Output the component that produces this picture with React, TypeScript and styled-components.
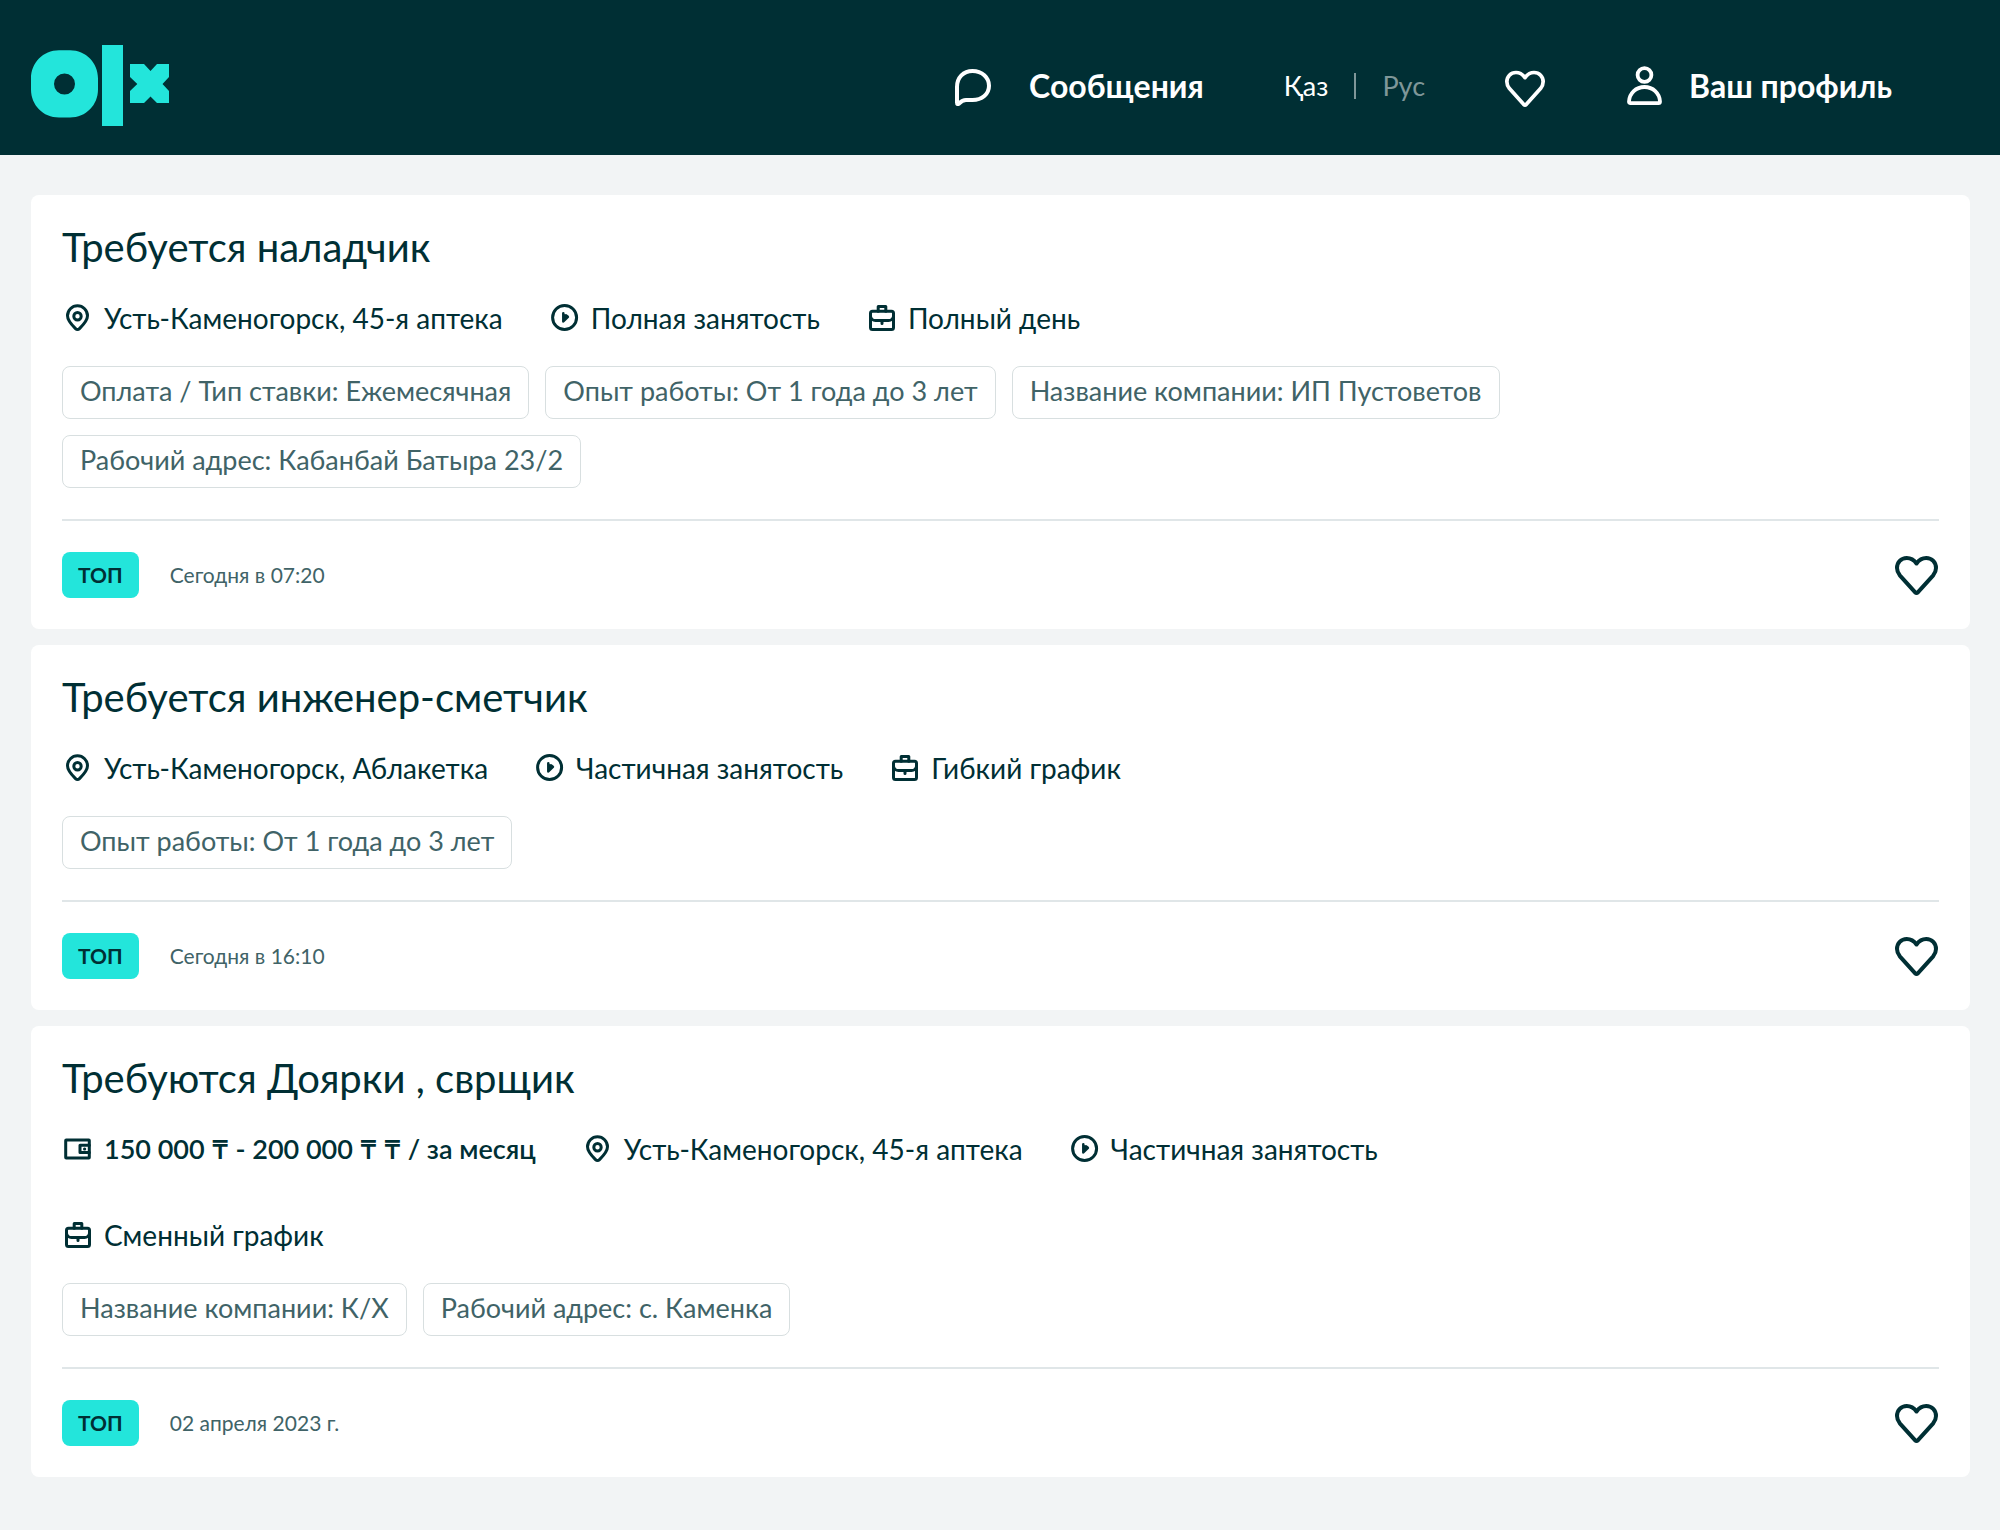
import React from "react";
import styled, { createGlobalStyle } from "styled-components";

const color = {
  dark: "#002f34",
  muted: "#406367",
  accent: "#23e5db",
  page: "#f2f4f5",
  line: "#d8dfe0",
};

const GlobalStyle = createGlobalStyle`
  *, *::before, *::after { box-sizing: border-box; }
  body {
    margin: 0;
    background: ${color.page};
    color: ${color.dark};
    font-family: Lato, "Open Sans", sans-serif;
  }
`;

const Header = styled.header`
  display: flex;
  align-items: center;
  justify-content: space-between;
  min-height: 155px;
  padding: 16px 108px 0 31px;
  background: ${color.dark};
  color: #fff;
`;

const LogoLink = styled.a`
  display: flex;
`;

const Nav = styled.nav`
  display: flex;
  align-items: center;
  gap: 80px;
`;

const NavLink = styled.a<{ $gap?: number }>`
  display: flex;
  align-items: center;
  gap: ${(p) => p.$gap ?? 0}px;
  color: #fff;
  font-size: 32px;
  font-weight: 700;
  line-height: 40px;
  text-decoration: none;
  white-space: nowrap;
`;

const Languages = styled.div`
  display: flex;
  align-items: center;
  gap: 26px;
`;

const LanguageButton = styled.button<{ $active?: boolean }>`
  padding: 0;
  border: 0;
  background: none;
  color: ${(p) => (p.$active ? "#fff" : "#7f9799")};
  font: inherit;
  font-size: 27px;
  line-height: 40px;
  cursor: pointer;
`;

const Separator = styled.span`
  width: 2px;
  height: 26px;
  background: #7f9799;
`;

const List = styled.main`
  display: flex;
  flex-direction: column;
  gap: 16px;
  padding: 40px 30px 52px 31px;
`;

const Card = styled.article`
  padding: 31px;
  border-radius: 8px;
  background: #fff;
`;

const Title = styled.h2`
  margin: 0 0 30px;
  font-size: 40px;
  font-weight: 400;
  line-height: 43px;
`;

const Details = styled.ul`
  display: flex;
  flex-wrap: wrap;
  gap: 48px 46px;
  max-width: 80%;
  margin: 0 0 29px;
  padding: 0;
  list-style: none;
`;

const Detail = styled.li<{ $strong?: boolean }>`
  display: flex;
  align-items: center;
  gap: 10px;
  font-size: ${(p) => (p.$strong ? 27 : 28)}px;
  font-weight: ${(p) => (p.$strong ? 600 : 400)};
  line-height: 38px;
  white-space: nowrap;
`;

const Tags = styled.ul`
  display: flex;
  flex-wrap: wrap;
  gap: 16px;
  margin: 0;
  padding: 0;
  list-style: none;
`;

const Tag = styled.li`
  padding: 5px 17px 8px;
  border: 1px solid ${color.line};
  border-radius: 8px;
  color: ${color.muted};
  font-size: 27px;
  line-height: 38px;
`;

const Footer = styled.footer`
  display: flex;
  align-items: center;
  gap: 31px;
  margin-top: 31px;
  padding-top: 31px;
  border-top: 2px solid #e0e6e8;
`;

const Badge = styled.span`
  padding: 0 16px;
  border-radius: 8px;
  background: ${color.accent};
  font-size: 21px;
  font-weight: 700;
  line-height: 46px;
`;

const PostedAt = styled.span`
  color: ${color.muted};
  font-size: 21px;
  line-height: 46px;
`;

const FavoriteButton = styled.button`
  display: flex;
  margin-left: auto;
  padding: 0;
  border: 0;
  background: none;
  color: inherit;
  cursor: pointer;
`;

const Icon = styled.svg.attrs({ "aria-hidden": true })`
  flex: none;
  fill: none;
  stroke: currentColor;
  stroke-linecap: round;
  stroke-linejoin: round;
`;

const Logo = () => (
  <svg width="138" height="81" viewBox="0 0 138 81" fill={color.accent} role="img" aria-label="OLX">
    <path
      fillRule="evenodd"
      d="M28 5.300h11C55 5.300 67 18 67 33.500v11C67 60 55 72.500 39 72.500H28C12 72.500 0 60 0 44.500v-11C0 18 12 5.300 28 5.300zM33.500 28.500a10.500 10.500 0 1 0 0 21a10.500 10.500 0 1 0 0-21z"
    />
    <path d="M71 0h21v81H71z" />
    <path d="M99 19h14l6.500 7 6.500-7h12v13l-6.500 7 6.500 7v12h-12l-6.500-6.500-6.500 6.500H99V46l7.300-7L99 32z" />
  </svg>
);

const heartPath =
  "M21.500 7.500C19 4 15.500 2 11.800 2C6 2 2 6.500 2 12c0 2.800 1 5 2.800 7.300L20 36.200q1.500 1.400 3 0L38.200 19.300C40 17 41 14.800 41 12C41 6.500 37 2 31.200 2C27.500 2 24 4 21.500 7.500z";

const CardHeartIcon = () => (
  <Icon width="44" height="39" viewBox="0 0 44 39" strokeWidth="4">
    <path d={heartPath} />
  </Icon>
);

const HeaderHeartIcon = () => (
  <Icon width="40" height="42" viewBox="0 -6 43 45" strokeWidth="4">
    <path d={heartPath} />
  </Icon>
);

const MessageIcon = () => (
  <Icon width="40" height="40" viewBox="-2 -3 40 40" strokeWidth="4">
    <path d="M2 18C2 8.500 8.500 2 17.500 2C27 2 34 8.500 34 16.800S27 31 17.500 31H11C8 31 6 32.500 4 34.600Q2 36 2 33.500z" />
  </Icon>
);

const UserIcon = () => (
  <Icon width="40" height="40" viewBox="-2 0 40 40" strokeWidth="3.800">
    <circle cx="17.500" cy="9" r="6.900" />
    <path d="M2 35.500C2.500 27 9 21 17.500 21S32.500 27 33 35.500q0 1.700-1.500 1.700h-28Q2 37.200 2 35.500z" />
  </Icon>
);

type DetailKind = "salary" | "place" | "employment" | "schedule";

const detailShapes: Record<DetailKind, React.ReactNode> = {
  salary: (
    <>
      <rect x="3.700" y="7" width="23.600" height="18" rx="0.500" />
      <path d="M27.300 12.300H18v7.200h9.300" />
      <path d="M22.500 15.900h.2" />
    </>
  ),
  place: (
    <>
      <path d="M15.500 27.600c-.8 0-1.400-.4-2-1C9.500 22.600 5.500 18.800 5.500 13.800a10 10 0 0 1 20 0c0 5-4 8.800-8 12.800-.6.600-1.200 1-2 1z" />
      <circle cx="15.500" cy="14.300" r="3.700" />
    </>
  ),
  employment: (
    <>
      <circle cx="15.600" cy="15.500" r="12" />
      <path d="M14.300 11.200v8.300L18.900 14.800l-2-1.500" strokeWidth="2.500" fill="currentColor" />
    </>
  ),
  schedule: (
    <>
      <rect x="4.500" y="9.300" width="23" height="18.200" rx="2" />
      <path d="M12.200 9.300V4.400h7.600v4.900M4.500 14.500q1 4 5 4h13q4 0 5-4M16 18.500v3" />
    </>
  ),
};

interface Job {
  title: string;
  details: [DetailKind, string][];
  tags: string[];
  posted: string;
}

const jobs: Job[] = [
  {
    title: "Требуется наладчик",
    details: [
      ["place", "Усть-Каменогорск, 45-я аптека"],
      ["employment", "Полная занятость"],
      ["schedule", "Полный день"],
    ],
    tags: [
      "Оплата / Тип ставки: Ежемесячная",
      "Опыт работы: От 1 года до 3 лет",
      "Название компании: ИП Пустоветов",
      "Рабочий адрес: Кабанбай Батыра 23/2",
    ],
    posted: "Сегодня в 07:20",
  },
  {
    title: "Требуется инженер-сметчик",
    details: [
      ["place", "Усть-Каменогорск, Аблакетка"],
      ["employment", "Частичная занятость"],
      ["schedule", "Гибкий график"],
    ],
    tags: ["Опыт работы: От 1 года до 3 лет"],
    posted: "Сегодня в 16:10",
  },
  {
    title: "Требуются Доярки , сврщик",
    details: [
      ["salary", "150 000 ₸ - 200 000 ₸ ₸ / за месяц"],
      ["place", "Усть-Каменогорск, 45-я аптека"],
      ["employment", "Частичная занятость"],
      ["schedule", "Сменный график"],
    ],
    tags: ["Название компании: К/Х", "Рабочий адрес: с. Каменка"],
    posted: "02 апреля 2023 г.",
  },
];

const JobCard = ({ job }: { job: Job }) => (
  <Card>
    <Title>{job.title}</Title>
    <Details>
      {job.details.map(([kind, text]) => (
        <Detail key={kind} $strong={kind === "salary"}>
          <Icon width="32" height="32" viewBox="0 0 32 32" strokeWidth="3">
            {detailShapes[kind]}
          </Icon>
          {text}
        </Detail>
      ))}
    </Details>
    <Tags>
      {job.tags.map((tag) => (
        <Tag key={tag}>{tag}</Tag>
      ))}
    </Tags>
    <Footer>
      <Badge>ТОП</Badge>
      <PostedAt>{job.posted}</PostedAt>
      <FavoriteButton type="button" aria-label="В избранное">
        <CardHeartIcon />
      </FavoriteButton>
    </Footer>
  </Card>
);

export default function App() {
  return (
    <>
      <GlobalStyle />
      <Header>
        <LogoLink href="#">
          <Logo />
        </LogoLink>
        <Nav>
          <NavLink href="#" $gap={36}>
            <MessageIcon />
            Сообщения
          </NavLink>
          <Languages>
            <LanguageButton type="button" $active>
              Қаз
            </LanguageButton>
            <Separator />
            <LanguageButton type="button">Рус</LanguageButton>
          </Languages>
          <NavLink href="#" aria-label="Избранное">
            <HeaderHeartIcon />
          </NavLink>
          <NavLink href="#" $gap={24}>
            <UserIcon />
            Ваш профиль
          </NavLink>
        </Nav>
      </Header>
      <List>
        {jobs.map((job) => (
          <JobCard key={job.title} job={job} />
        ))}
      </List>
    </>
  );
}
